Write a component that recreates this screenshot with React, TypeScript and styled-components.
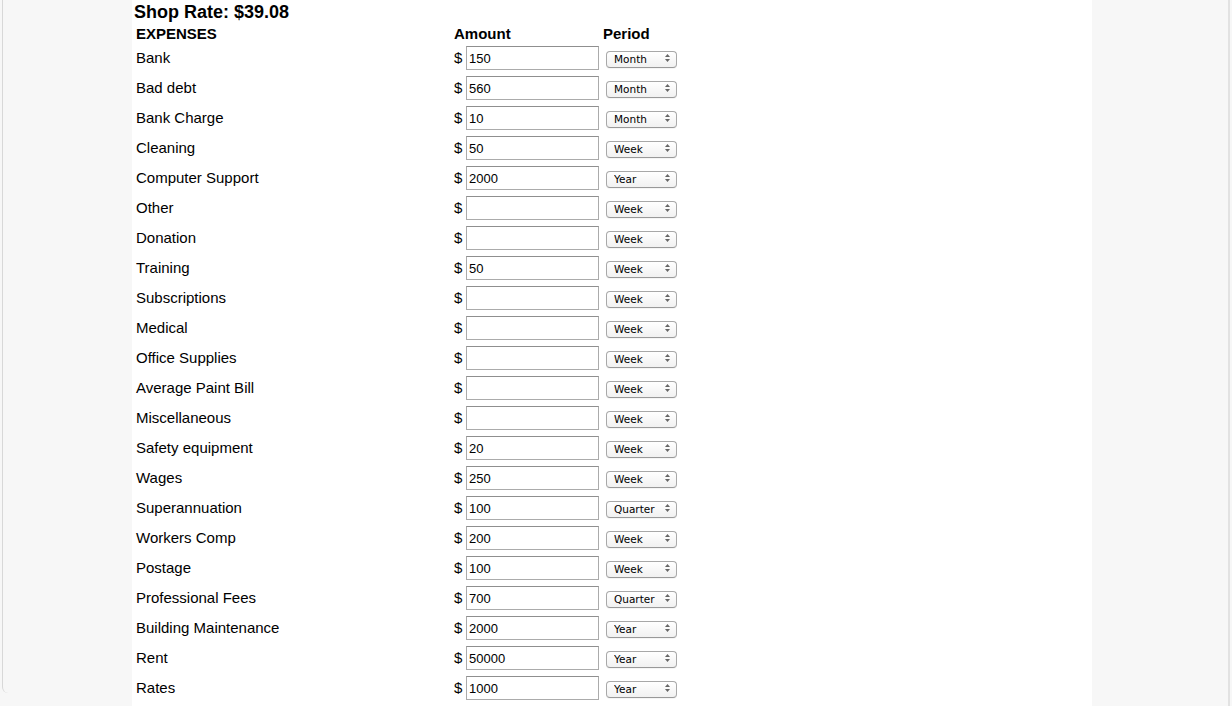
import React from "react";
import styled, { createGlobalStyle } from "styled-components";

const GlobalStyle = createGlobalStyle`
  html, body { margin: 0; padding: 0; background: #f7f7f7; }
  body { font-family: "Liberation Sans", Arial, sans-serif; color: #000; }
`;

const Page = styled.div`
  display: flex;
  height: 706px;
  overflow: hidden;
  background: #f7f7f7;
`;

const LeftGutter = styled.div`
  box-sizing: border-box;
  margin-left: 2px;
  width: 130px;
  height: 693px;
  border-left: 1px solid #d8d8d8;
  border-bottom-left-radius: 6px;
`;

const RightGutter = styled.div`
  flex: 1;
  margin-right: 2px;
  border-right: 2px solid #e2e2e2;
`;

const Column = styled.div`
  width: 960px;
  background: #fff;
  display: flex;
  flex-direction: column;
`;

const Title = styled.h1`
  margin: 0;
  padding: 1px 0 0 2px;
  box-sizing: border-box;
  font-size: 18px;
  font-weight: bold;
  line-height: 22px;
  height: 23px;
`;

const Table = styled.div`
  display: grid;
  grid-template-columns: 318px 149px auto;
  padding-left: 4px;
`;

const HeadCell = styled.div`
  font-size: 15px;
  font-weight: bold;
  height: 20px;
  display: flex;
  align-items: center;
`;

const LabelCell = styled.div`
  box-sizing: border-box;
  font-size: 15px;
  height: 30px;
  padding-bottom: 2px;
  display: flex;
  align-items: center;
`;

const AmountCell = styled.div`
  box-sizing: border-box;
  height: 30px;
  display: flex;
  align-items: center;
  gap: 4px;
  font-size: 15px;
`;

const Dollar = styled.span`
  width: 8px;
  margin-bottom: 2px;
`;

const AmountInput = styled.input`
  box-sizing: border-box;
  width: 133px;
  height: 24px;
  margin: 0;
  padding: 1px 2px 0 2px;
  border: 1px solid #ababab;
  border-top-color: #8f8f8f;
  border-radius: 0;
  font-family: "Liberation Sans", Arial, sans-serif;
  font-size: 13px;
  color: #000;
  background: #fff;
  outline: none;
`;

const PeriodCell = styled.div`
  box-sizing: border-box;
  height: 30px;
  display: flex;
  align-items: center;
  padding-left: 3px;
  padding-bottom: 1px;
`;

const SelectWrap = styled.div`
  position: relative;
  width: 71px;
  height: 17px;
`;

const PeriodSelect = styled.select`
  appearance: none;
  -webkit-appearance: none;
  box-sizing: border-box;
  width: 100%;
  height: 100%;
  margin: 0;
  padding: 0 0 0 7px;
  border: 1px solid #a8a8a8;
  border-bottom-color: #999;
  border-radius: 4px;
  background: linear-gradient(#ffffff, #f1f1f1);
  font-family: "DejaVu Sans", "Liberation Sans", sans-serif;
  font-size: 10.5px;
  line-height: 15px;
  color: #000;
  box-shadow: 0 1px 0 rgba(0, 0, 0, 0.04);
`;

const Arrows = styled.svg`
  position: absolute;
  right: 7px;
  top: 5px;
  pointer-events: none;
`;

type Period = "Week" | "Month" | "Quarter" | "Year";

const rows: { label: string; amount: string; period: Period }[] = [
  { label: "Bank", amount: "150", period: "Month" },
  { label: "Bad debt", amount: "560", period: "Month" },
  { label: "Bank Charge", amount: "10", period: "Month" },
  { label: "Cleaning", amount: "50", period: "Week" },
  { label: "Computer Support", amount: "2000", period: "Year" },
  { label: "Other", amount: "", period: "Week" },
  { label: "Donation", amount: "", period: "Week" },
  { label: "Training", amount: "50", period: "Week" },
  { label: "Subscriptions", amount: "", period: "Week" },
  { label: "Medical", amount: "", period: "Week" },
  { label: "Office Supplies", amount: "", period: "Week" },
  { label: "Average Paint Bill", amount: "", period: "Week" },
  { label: "Miscellaneous", amount: "", period: "Week" },
  { label: "Safety equipment", amount: "20", period: "Week" },
  { label: "Wages", amount: "250", period: "Week" },
  { label: "Superannuation", amount: "100", period: "Quarter" },
  { label: "Workers Comp", amount: "200", period: "Week" },
  { label: "Postage", amount: "100", period: "Week" },
  { label: "Professional Fees", amount: "700", period: "Quarter" },
  { label: "Building Maintenance", amount: "2000", period: "Year" },
  { label: "Rent", amount: "50000", period: "Year" },
  { label: "Rates", amount: "1000", period: "Year" },
];

const periods: Period[] = ["Week", "Month", "Quarter", "Year"];

function PeriodPicker({ value }: { value: Period }) {
  return (
    <SelectWrap>
      <PeriodSelect defaultValue={value}>
        {periods.map((p) => (
          <option key={p} value={p}>
            {p}
          </option>
        ))}
      </PeriodSelect>
      <Arrows width="5" height="8" viewBox="0 0 5 8">
        <path d="M2.5 0 L5 3 L0 3 Z" fill="#666" />
        <path d="M2.5 8 L5 5 L0 5 Z" fill="#666" />
      </Arrows>
    </SelectWrap>
  );
}

export default function App() {
  return (
    <>
      <GlobalStyle />
      <Page>
        <LeftGutter />
        <Column>
          <Title>Shop Rate: $39.08</Title>
          <Table>
            <HeadCell>EXPENSES</HeadCell>
            <HeadCell>Amount</HeadCell>
            <HeadCell>Period</HeadCell>
            {rows.map((r) => (
              <React.Fragment key={r.label}>
                <LabelCell>{r.label}</LabelCell>
                <AmountCell>
                  <Dollar>$</Dollar>
                  <AmountInput type="text" defaultValue={r.amount} />
                </AmountCell>
                <PeriodCell>
                  <PeriodPicker value={r.period} />
                </PeriodCell>
              </React.Fragment>
            ))}
          </Table>
        </Column>
        <RightGutter />
      </Page>
    </>
  );
}
